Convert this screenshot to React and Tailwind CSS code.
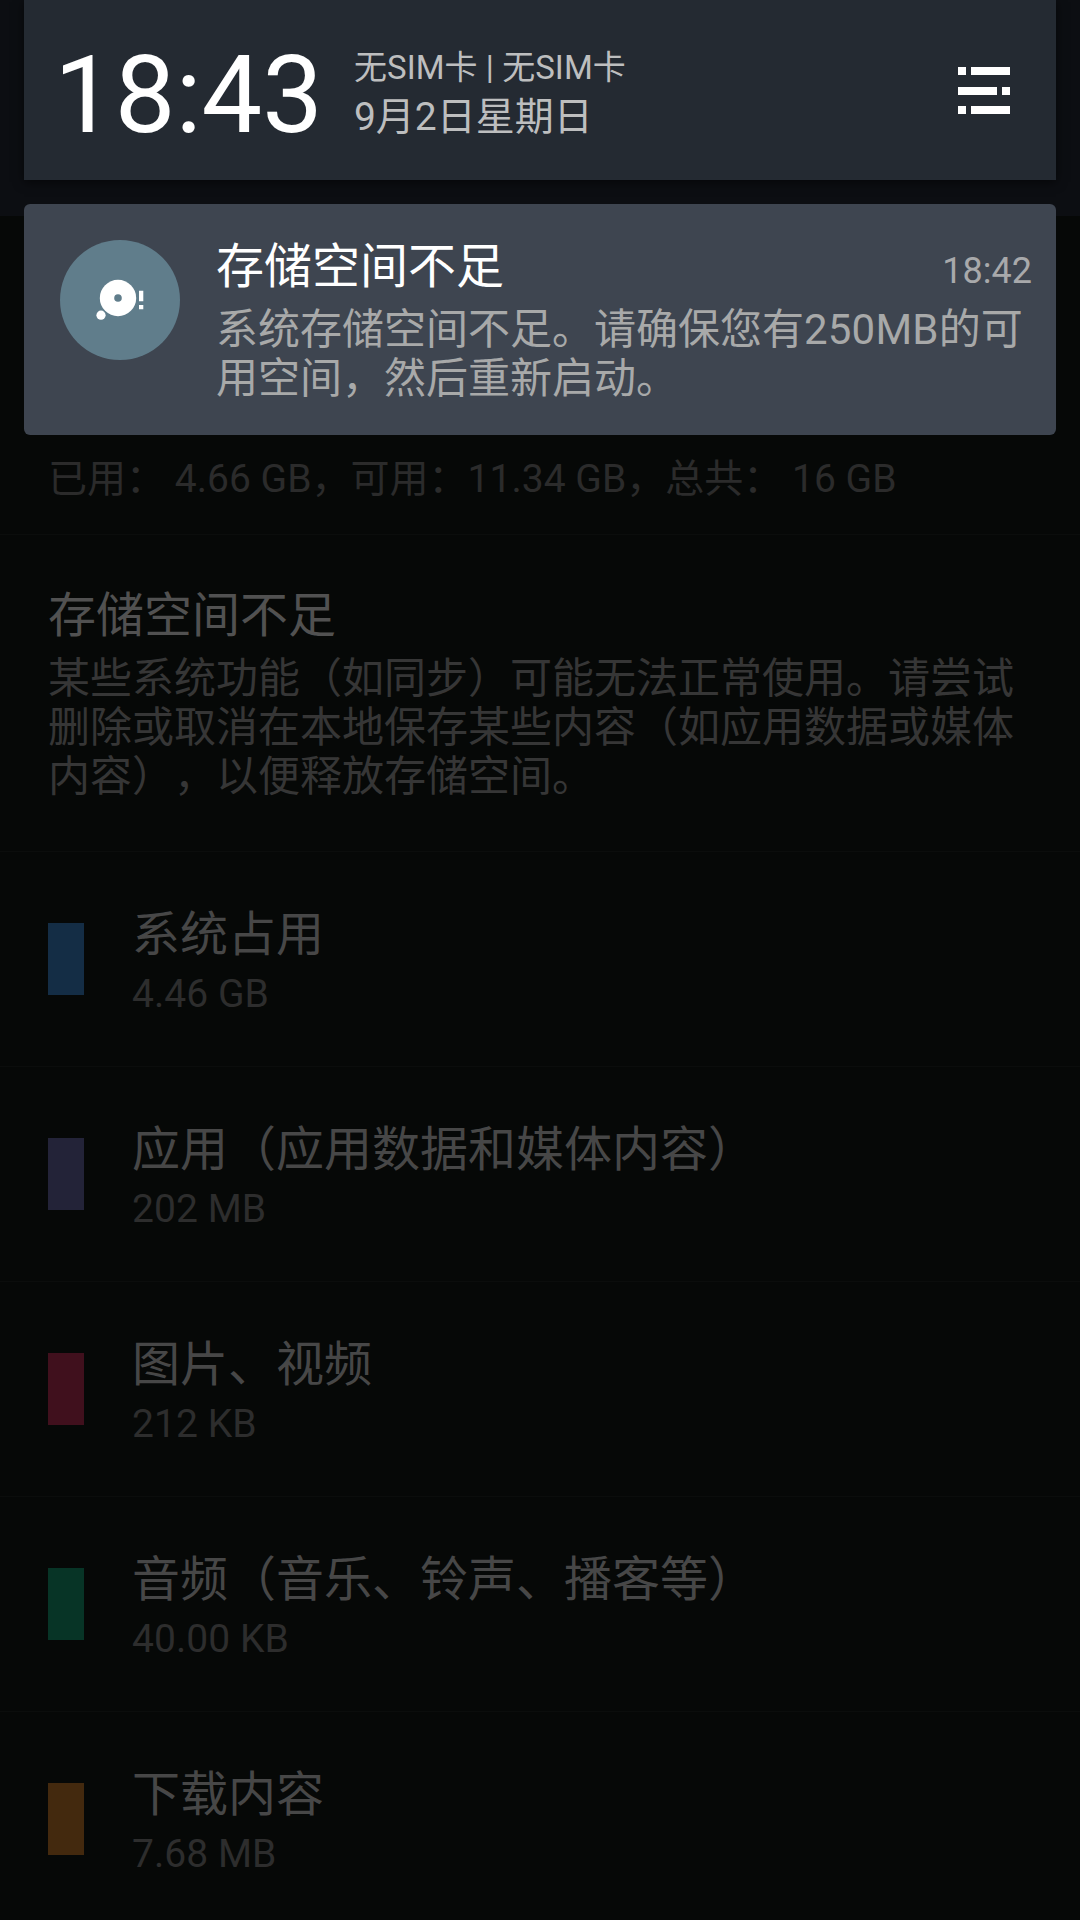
const rows = [
  { title: '系统占用', size: '4.46 GB', color: 'bg-[#142d45]' },
  { title: '应用（应用数据和媒体内容）', size: '202 MB', color: 'bg-[#232338]' },
  { title: '图片、视频', size: '212 KB', color: 'bg-[#40101d]' },
  { title: '音频（音乐、铃声、播客等）', size: '40.00 KB', color: 'bg-[#073426]' },
  { title: '下载内容', size: '7.68 MB', color: 'bg-[#43290e]' },
];

function StorageRow({ title, size, color }) {
  return (
    <li className="flex h-[215px] items-center border-b border-[#0b0d0c] pl-12">
      <span className={`h-[72px] w-9 ${color}`} />
      <div className="ml-12 pt-[10px]">
        <p className="text-[48px] leading-[60px] text-[#474747]">{title}</p>
        <p className="text-[39px] leading-[58px] tracking-[0.05px] text-[#2d2d2d]">{size}</p>
      </div>
    </li>
  );
}

function StorageSettings() {
  return (
    <main className="flex h-full flex-col">
      <div className="h-[216px] shrink-0 bg-[#0c0e12]" />
      <p className="h-[319px] shrink-0 border-b border-[#0b0d0c] pt-[234px] pl-12 text-[39px] leading-[58px] tracking-[0.02px] text-[#2b2b2b]">
        已用： 4.66 GB，可用：11.34 GB，总共： 16 GB
      </p>
      <section className="h-[317px] shrink-0 border-b border-[#0b0d0c] pt-[51px] pl-12">
        <h2 className="text-[48px] leading-[60px] text-[#515151]">存储空间不足</h2>
        <p className="mt-2 text-[42px] leading-[49px] text-[#363636]">
          某些系统功能（如同步）可能无法正常使用。请尝试<br />
          删除或取消在本地保存某些内容（如应用数据或媒体<br />
          内容），以便释放存储空间。
        </p>
      </section>
      <ul>
        {rows.map((row) => <StorageRow key={row.title} {...row} />)}
      </ul>
    </main>
  );
}

function TogglesIcon() {
  return (
    <svg width="52" height="47" viewBox="0 0 52 47" fill="#fff" shapeRendering="crispEdges">
      <path d="M0 0h8v8H0zM13 0h39v8H13zM0 20h39v8H0zM44 20h8v8h-8zM0 39h8v8H0zM13 39h39v8H13z" />
    </svg>
  );
}

function DiskAlertIcon() {
  return (
    <svg width="120" height="120" viewBox="0 0 120 120">
      <circle cx="60" cy="60" r="60" fill="#607d8b" />
      <circle cx="58" cy="58" r="18.2" fill="#fff" />
      <circle cx="58" cy="58" r="3.8" fill="#607d8b" />
      <circle cx="41" cy="75.2" r="4.6" fill="#fff" />
      <path d="M79 50.7h4.3v10.6h-4.3zM79 65h4.3v4.2h-4.3z" fill="#fff" />
    </svg>
  );
}

function NotificationShade() {
  return (
    <div className="absolute inset-0 flex flex-col px-6">
      <header className="flex h-[180px] items-center bg-[#242a32] pr-[46px] pl-[30px] shadow-[0_2px_10px_rgba(0,0,0,0.6)]">
        <time className="pt-[9px] text-[108px] leading-[120px] text-white">18:43</time>
        <div className="ml-[31px] pt-[6px] text-[#bdbebf]">
          <p className="text-[33px] leading-[48px] tracking-[0.05px]">无SIM卡 | 无SIM卡</p>
          <p className="text-[39px] leading-[50px]">9月2日星期日</p>
        </div>
        <span className="ml-auto"><TogglesIcon /></span>
      </header>
      <article className="mt-6 flex h-[231px] rounded-md bg-[#3e4550] pt-9 pl-9">
        <DiskAlertIcon />
        <div className="ml-9 flex-1">
          <div className="flex h-14 items-start justify-between pr-6">
            <h1 className="text-[48px] leading-[54px] text-white">存储空间不足</h1>
            <time className="pt-[5px] text-[36px] leading-[52px] text-[#a8a9ab]">18:42</time>
          </div>
          <p className="mt-[9px] text-[42px] leading-[49px] text-[#a8a9a9]">
            系统存储空间不足。请确保您有<span className="tracking-[0.2px]">250MB</span>的可<br />
            用空间，然后重新启动。
          </p>
        </div>
      </article>
    </div>
  );
}

export default function App() {
  return (
    <div
      lang="zh-CN"
      className="relative h-[1920px] w-[1080px] overflow-hidden bg-[#060807] font-['Roboto','Noto_Sans_CJK_SC',sans-serif] whitespace-nowrap [text-spacing-trim:space-all]"
    >
      <StorageSettings />
      <NotificationShade />
    </div>
  );
}
